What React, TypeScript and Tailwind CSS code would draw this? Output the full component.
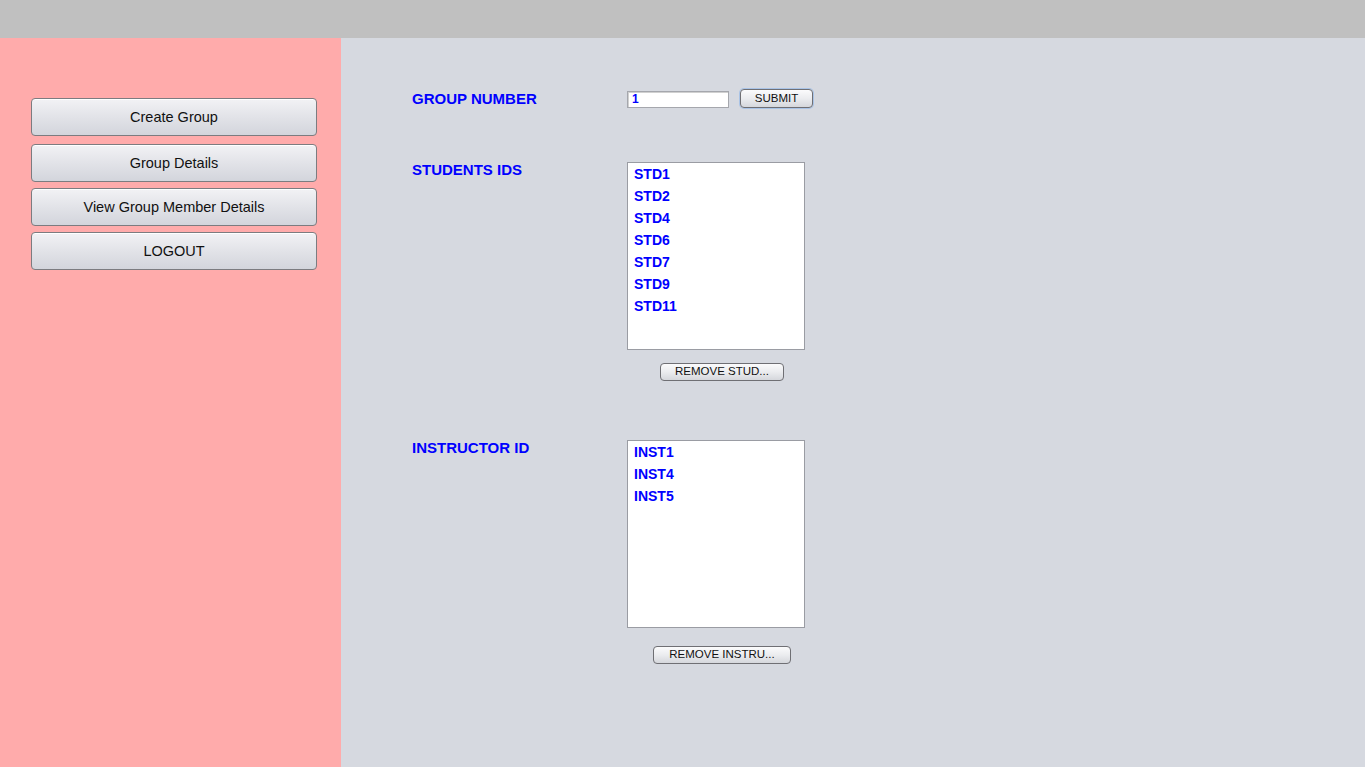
import React from "react";

const font = { fontFamily: '"Liberation Sans", Arial, sans-serif' };

function SideButton({ label, className = "" }: { label: string; className?: string }) {
  return (
    <button
      className={`w-[286px] h-[38px] pt-[2px] rounded-[4px] border border-[#7c7c80] bg-gradient-to-b from-[#f2f2f5] via-[#e2e3e8] to-[#d3d5dc] text-[14.5px] text-[#111] shadow-[inset_0_1px_0_#ffffff] ${className}`}
    >
      {label}
    </button>
  );
}

function SmallButton({ label, className = "" }: { label: string; className?: string }) {
  return (
    <button
      className={`h-[18px] rounded-[4px] border border-[#6f6f74] bg-gradient-to-b from-[#fbfbfc] via-[#ebecef] to-[#d5d7dc] text-[11.5px] leading-none text-[#111] ${className}`}
    >
      {label}
    </button>
  );
}

function ListBox({ items }: { items: string[] }) {
  return (
    <div className="w-[178px] h-[188px] border border-[#9a9ca3] bg-white pl-[6px]">
      {items.map((it) => (
        <div key={it} className="h-[22px] leading-[22px] text-[14px] font-bold text-[#0000ff]">
          {it}
        </div>
      ))}
    </div>
  );
}

export default function App() {
  return (
    <div className="w-full h-screen flex flex-col overflow-hidden" style={font}>
      <div className="h-[38px] bg-[#c0c0c0] shrink-0" />
      <div className="flex flex-1">
        <div className="w-[341px] bg-[#ffabab] pl-[31px] pt-[60px] flex flex-col">
          <SideButton label="Create Group" />
          <SideButton label="Group Details" className="mt-[8px]" />
          <SideButton label="View Group Member Details" className="mt-[6px]" />
          <SideButton label="LOGOUT" className="mt-[6px]" />
        </div>
        <div className="flex-1 bg-[#d6d9e0] pl-[71px] pt-[51px] flex flex-col">
          <div className="flex items-center h-[19px]">
            <div className="w-[215px] text-[15px] font-bold text-[#0000ff] leading-[17px]">GROUP NUMBER</div>
            <div className="w-[102px] h-[17px] mt-[2px] bg-white border border-[#a5a7ad] shadow-[inset_1px_1px_0_#d0d0d0] text-[12px] font-bold text-[#0000ff] leading-[15px] pl-[4px]">
              1
            </div>
            <SmallButton
              label="SUBMIT"
              className="ml-[11px] w-[73px] h-[19px] border-[#4b5a73] shadow-[0_0_0_1px_#a9c3e6]"
            />
          </div>

          <div className="flex mt-[54px]">
            <div className="w-[215px] text-[15px] font-bold text-[#0000ff] leading-[17px] -mt-[1px]">STUDENTS IDS</div>
            <div className="flex flex-col">
              <ListBox items={["STD1", "STD2", "STD4", "STD6", "STD7", "STD9", "STD11"]} />
              <SmallButton label="REMOVE STUD..." className="mt-[13px] ml-[33px] w-[124px] h-[17px]" />
            </div>
          </div>

          <div className="flex mt-[59px]">
            <div className="w-[215px] text-[15px] font-bold text-[#0000ff] leading-[17px] -mt-[1px]">INSTRUCTOR ID</div>
            <div className="flex flex-col">
              <ListBox items={["INST1", "INST4", "INST5"]} />
              <SmallButton label="REMOVE INSTRU..." className="mt-[18px] ml-[26px] w-[138px] h-[17px]" />
            </div>
          </div>
        </div>
      </div>
    </div>
  );
}
